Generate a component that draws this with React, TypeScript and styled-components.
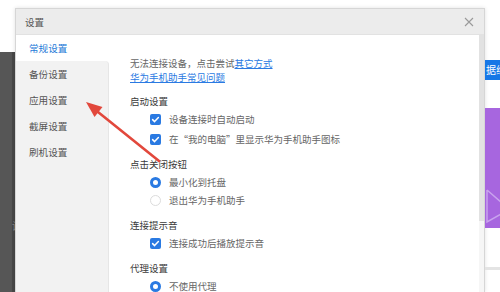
import styled, { createGlobalStyle } from 'styled-components';

const GlobalStyle = createGlobalStyle`
  html, body {
    margin: 0;
    padding: 0;
    background: #ffffff;
    overflow: hidden;
  }
  body {
    font-family: "Noto Sans CJK SC", "Noto Sans", sans-serif;
  }
`;

const BLUE = '#2a7ae2';

const sideItems = ['常规设置', '备份设置', '应用设置', '截屏设置', '刷机设置'];

const App = () => {
  const [active, ...rest] = sideItems;
  return (
    <>
      <GlobalStyle />
      <Screen>
        <LeftEdge>
          <EdgeTop />
          <EdgeDark>
            <EdgeGlyph>设</EdgeGlyph>
          </EdgeDark>
        </LeftEdge>

        <DialogSlot>
          <Dialog>
            <TitleBar>
              <span>设置</span>
              <CloseIcon width="10" height="10" viewBox="0 0 10 10">
                <path d="M1 1 L9 9 M9 1 L1 9" stroke="#9a9a9a" strokeWidth="1.1" fill="none" />
              </CloseIcon>
            </TitleBar>
            <Body>
              <Sidebar>
                <SideItem active>{active}</SideItem>
                <SidePanel>
                  {rest.map(item => (
                    <SideItem key={item}>{item}</SideItem>
                  ))}
                </SidePanel>
              </Sidebar>

              <Content>
                <Intro>
                  <p>
                    无法连接设备，点击尝试<Link>其它方式</Link>
                  </p>
                  <p>
                    <Link>华为手机助手常见问题</Link>
                  </p>
                </Intro>

                <Section>
                  <Heading>启动设置</Heading>
                  <Options spaced>
                    <Option>
                      <CheckBox />
                      设备连接时自动启动
                    </Option>
                    <Option>
                      <CheckBox />
                      在“我的电脑”里显示华为手机助手图标
                    </Option>
                  </Options>
                </Section>

                <Section>
                  <Heading>点击关闭按钮</Heading>
                  <Options>
                    <Option>
                      <Radio checked />
                      最小化到托盘
                    </Option>
                    <Option>
                      <Radio />
                      退出华为手机助手
                    </Option>
                  </Options>
                </Section>

                <Section>
                  <Heading>连接提示音</Heading>
                  <Options>
                    <Option>
                      <CheckBox />
                      连接成功后播放提示音
                    </Option>
                  </Options>
                </Section>

                <Section>
                  <Heading>代理设置</Heading>
                  <Options>
                    <Option>
                      <Radio checked />
                      不使用代理
                    </Option>
                  </Options>
                </Section>
              </Content>

              <ScrollTrack>
                <ScrollThumb />
              </ScrollTrack>
            </Body>
          </Dialog>
        </DialogSlot>

        <RightEdge>
          <BlueButton>据线</BlueButton>
          <PurpleCard>
            <svg width="16" height="36" viewBox="0 0 16 36">
              <path d="M2 2 L16 14 M2 2 L2 34 L16 26" stroke="#c9a3ee" strokeWidth="1.5" fill="none" />
            </svg>
          </PurpleCard>
          <GrayRule />
        </RightEdge>

        <Arrow width="500" height="292" viewBox="0 0 500 292">
          <line x1="159" y1="161" x2="98" y2="112" stroke="#e2483c" strokeWidth="2.6" strokeLinecap="round" />
          <polygon points="86,102 102.5,107 94.5,117" fill="#e2483c" />
        </Arrow>
      </Screen>
    </>
  );
};

const Screen = styled.div`
  position: relative;
  width: 500px;
  height: 292px;
  overflow: hidden;
  display: flex;
  background: #ffffff;
`;

const LeftEdge = styled.div`
  width: 15px;
  flex-shrink: 0;
  display: flex;
  flex-direction: column;
`;

const EdgeTop = styled.div`
  height: 52px;
  background: #ffffff;
`;

const EdgeDark = styled.div`
  flex: 1;
  background: linear-gradient(to right, #565656 0, #565656 12px, #474747 12px);
  display: flex;
  justify-content: flex-end;
  padding-top: 168px;
`;

const EdgeGlyph = styled.span`
  font-size: 10px;
  line-height: 12px;
  color: #8a8a8a;
  margin-right: -7px;
  height: 12px;
`;

const DialogSlot = styled.div`
  width: 470px;
  flex-shrink: 0;
  padding-top: 8px;
`;

const Dialog = styled.div`
  height: 100%;
  background: #ffffff;
  border: 1px solid #d6d6d6;
  border-bottom: none;
  box-sizing: border-box;
  box-shadow: 0 0 4px rgba(0, 0, 0, 0.12);
  display: flex;
  flex-direction: column;
`;

const TitleBar = styled.div`
  height: 25px;
  flex-shrink: 0;
  background: #ececec;
  border-bottom: 1px solid #e2e2e2;
  display: flex;
  align-items: center;
  justify-content: space-between;
  padding: 0 10px 0 9px;
  font-size: 9.5px;
  color: #555;
`;

const CloseIcon = styled.svg`
  display: block;
`;

const Body = styled.div`
  flex: 1;
  display: flex;
  min-height: 0;
`;

const Sidebar = styled.div`
  width: 93px;
  flex-shrink: 0;
  display: flex;
  flex-direction: column;
`;

const SidePanel = styled.div`
  flex: 1;
  background: #f2f2f2;
  border-right: 1px solid #e6e6e6;
  border-top-right-radius: 4px;
`;

const SideItem = styled.div<{ active?: boolean }>`
  height: 26px;
  display: flex;
  align-items: center;
  padding-left: 13px;
  font-size: 9.6px;
  color: ${props => (props.active ? '#1f7bd8' : '#555')};
`;

const Content = styled.div`
  flex: 1;
  padding: 21px 0 0 21px;
  font-size: 9.5px;
  color: #555;
`;

const Intro = styled.div`
  margin-bottom: 8px;
  p {
    margin: 0;
    line-height: 14px;
    color: #666;
  }
`;

const Link = styled.a`
  color: ${BLUE};
  text-decoration: underline;
  text-underline-offset: 1px;
`;

const Section = styled.div`
  margin-bottom: 7px;
`;

const Heading = styled.div`
  height: 18px;
  line-height: 18px;
  color: #3a3a3a;
`;

const Options = styled.div<{ spaced?: boolean }>`
  display: flex;
  flex-direction: column;
  gap: ${props => (props.spaced ? '2px' : '0')};
  padding-left: 20px;
`;

const Option = styled.div`
  height: 18px;
  display: flex;
  align-items: center;
  gap: 8px;
  color: #666;
`;

const CheckBox = () => (
  <CheckSvg width="11" height="11" viewBox="0 0 11 11">
    <rect x="0" y="0" width="11" height="11" rx="2" fill={BLUE} />
    <path d="M2.6 5.6 L4.6 7.6 L8.4 3.6" stroke="#fff" strokeWidth="1.5" fill="none" strokeLinecap="round" strokeLinejoin="round" />
  </CheckSvg>
);

const CheckSvg = styled.svg`
  display: block;
  flex-shrink: 0;
`;

const Radio = styled.span<{ checked?: boolean }>`
  width: 11px;
  height: 11px;
  box-sizing: border-box;
  border-radius: 50%;
  flex-shrink: 0;
  background: #fff;
  border: ${props => (props.checked ? `3px solid ${BLUE}` : '1px solid #dcdcdc')};
`;

const ScrollTrack = styled.div`
  width: 5px;
  flex-shrink: 0;
  background: #f6f6f6;
`;

const ScrollThumb = styled.div`
  height: 186px;
  background: #e2e2e2;
`;

const RightEdge = styled.div`
  flex: 1;
  display: flex;
  flex-direction: column;
  padding-top: 60px;
`;

const BlueButton = styled.div`
  height: 20px;
  background: #1677e6;
  color: #fff;
  font-size: 10px;
  line-height: 20px;
  white-space: nowrap;
  overflow: hidden;
  padding-left: 1px;
`;

const PurpleCard = styled.div`
  margin-top: 28px;
  height: 120px;
  background: #a766df;
  display: flex;
  align-items: flex-end;
  padding-bottom: 4px;
  box-sizing: border-box;
  svg {
    display: block;
  }
`;

const GrayRule = styled.div`
  margin-top: 39px;
  height: 3px;
  background: #e4e4e4;
`;

const Arrow = styled.svg`
  position: absolute;
  left: 0;
  top: 0;
  pointer-events: none;
`;

export default App;
